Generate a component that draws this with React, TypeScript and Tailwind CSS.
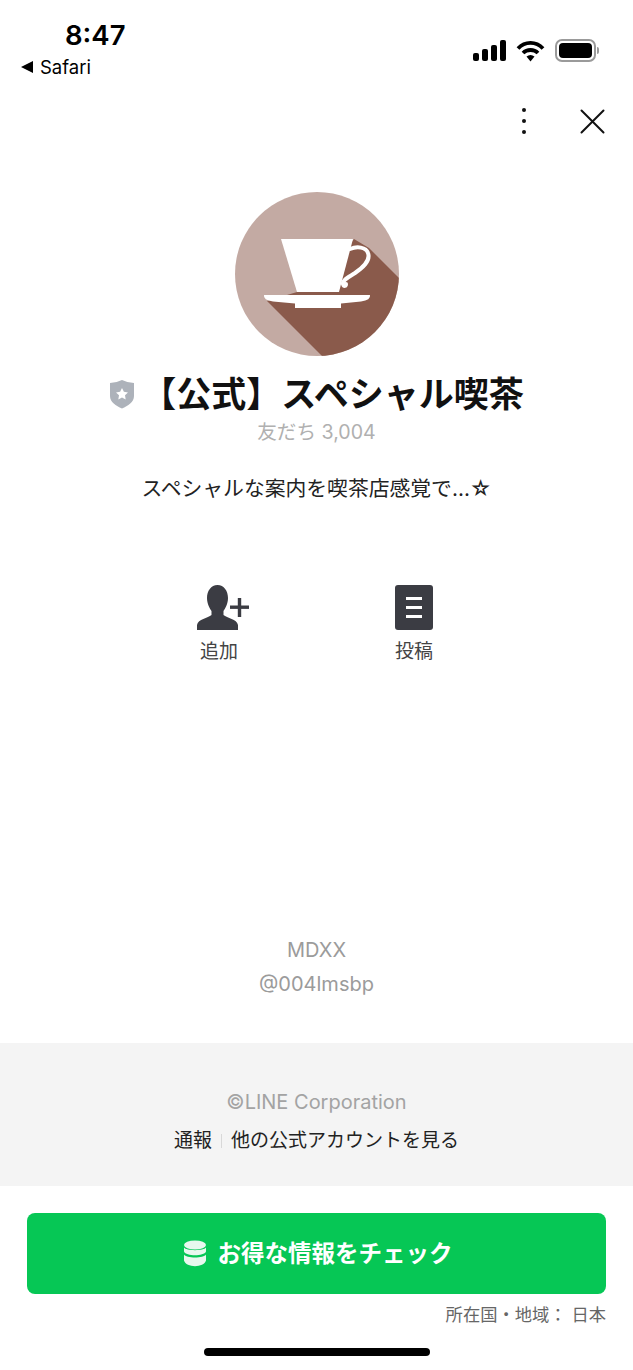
const FONT = "font-['Inter','Noto_Sans_CJK_JP',sans-serif]";

function StatusIcons() {
  return (
    <div className="flex items-center gap-[10px]">
      <svg width="33" height="21" viewBox="0 0 33 21" fill="#000">
        <rect x="0" y="13" width="6" height="8" rx="2" />
        <rect x="9" y="9" width="6" height="12" rx="2" />
        <rect x="18" y="5" width="6" height="16" rx="2" />
        <rect x="27" y="0" width="6" height="21" rx="2" />
      </svg>
      <svg width="29" height="22" viewBox="0 0 29 22" fill="none" stroke="#000" strokeWidth="3.8">
        <path d="M2 8.5 C9 1 20 1 27 8.5" />
        <path d="M7 13 C11 9 18 9 22 13" />
        <path d="M10.5 16.5 L14.5 21.5 L18.5 16.5 C16 14.5 13 14.5 10.5 16.5 Z" fill="#000" stroke="none" />
      </svg>
      <div className="flex items-center">
        <div className="flex h-[23px] w-[41px] items-center justify-center rounded-[7px] border-2 border-[#9a9a9a] p-[2px]">
          <div className="h-full w-full rounded-[4px] bg-black" />
        </div>
        <div className="ml-[1px] h-[7px] w-[2px] rounded-r-full bg-[#9a9a9a]" />
      </div>
    </div>
  );
}

function StatusBar() {
  return (
    <div className="flex h-[93px] shrink-0 items-start justify-between pl-[21px] pr-[34px]">
      <div className="flex flex-col">
        <div className="mt-[17px] pl-[44px] text-[27.5px] leading-[36px] font-semibold text-black">8:47</div>
        <div className="mt-[2px] flex items-center gap-[7px] text-[18.5px] leading-[24px] text-black">
          <svg width="12" height="12" viewBox="0 0 12 12" fill="#000">
            <path d="M0 6 L12 0 V12 Z" />
          </svg>
          <span>Safari</span>
        </div>
      </div>
      <div className="mt-[39px]">
        <StatusIcons />
      </div>
    </div>
  );
}

function ToolBar() {
  return (
    <div className="flex h-[58px] shrink-0 items-center justify-end gap-[54px] pr-[28px] pb-[2px]">
      <div className="flex flex-col gap-[6.5px]">
        <div className="h-[4.5px] w-[4.5px] rounded-full bg-[#111]" />
        <div className="h-[4.5px] w-[4.5px] rounded-full bg-[#111]" />
        <div className="h-[4.5px] w-[4.5px] rounded-full bg-[#111]" />
      </div>
      <svg width="25" height="25" viewBox="0 0 25 25" stroke="#111" strokeWidth="2" strokeLinecap="round">
        <path d="M1.5 1.5 L23.5 23.5 M23.5 1.5 L1.5 23.5" />
      </svg>
    </div>
  );
}

function CafeLogo() {
  return (
    <svg width="164" height="164" viewBox="0 0 164 164" className="block">
      <defs>
        <clipPath id="logo-circle">
          <circle cx="82" cy="82" r="82" />
        </clipPath>
      </defs>
      <g clipPath="url(#logo-circle)">
        <rect width="164" height="164" fill="#c3aaa3" />
        <path d="M32 109 L88 165 L170 165 L170 92 L134 56 L119 47 L100 70 L62 100 Z" fill="#8a5a4b" />
      </g>
      <path d="M46 47 H118 L104 100 H62 Z" fill="#fff" />
      <path
        d="M115 57 C122 54 131 55 133 61 C136 69 127 76 120 81 C114 85 107 88 108 92 C109 95 111 94 111 92"
        fill="none"
        stroke="#fff"
        strokeWidth="4"
        strokeLinecap="round"
      />
      <path d="M29 103 H135 Q136 108 126 109.5 L106 111.5 V116 H60 V111.5 L38 109.5 Q28 108 29 103 Z" fill="#fff" />
    </svg>
  );
}

function ShieldBadge() {
  return (
    <svg width="26" height="30" viewBox="0 0 26 30" className="shrink-0">
      <path d="M1 4 Q7 4 13 1 Q19 4 25 4 V17 C25 23 19 27 13 29.5 C7 27 1 23 1 17 Z" fill="#adb2ba" />
      <path
        d="M13 9 L14.9 12.8 L19 13.4 L16 16.3 L16.7 20.4 L13 18.5 L9.3 20.4 L10 16.3 L7 13.4 L11.1 12.8 Z"
        fill="#fff"
      />
    </svg>
  );
}

function Profile() {
  return (
    <div className="flex flex-col items-center">
      <div className="mt-[41px]">
        <CafeLogo />
      </div>
      <div className="mt-[14px] flex h-[48px] items-center">
        <ShieldBadge />
        <h1 className="ml-[6px] text-[35px] leading-[48px] font-semibold whitespace-nowrap text-[#111]">
          【公式】スペシャル喫茶
        </h1>
      </div>
      <div className="mt-[1px] text-[19.6px] leading-[26px] text-[#b0b0b0]">友だち 3,004</div>
      <p className="mt-[29px] text-[20.8px] leading-[30px] text-[#222]">スペシャルな案内を喫茶店感覚で…☆</p>
    </div>
  );
}

function Actions() {
  return (
    <div className="mt-[81px] flex justify-center gap-[135px]">
      <div className="flex w-[60px] flex-col items-center">
        <svg width="52" height="45" viewBox="0 0 52 45" fill="#3b3c43" className="ml-[8px]">
          <path d="M20.5 0 C27 0 31 6 31 13 C31 19 28 24 26.5 26 V30 C30 33 40 34 41 40 V45 H0 V40 C1 34 11 33 14.5 30 V26 C13 24 10 19 10 13 C10 6 14 0 20.5 0 Z" />
          <rect x="31" y="19" width="21" height="7" fill="#fff" />
          <rect x="33" y="20.5" width="19" height="3.4" />
          <rect x="40.8" y="13" width="3.4" height="19" />
        </svg>
        <span className="mt-[10px] text-[19px] leading-[24px] whitespace-nowrap text-[#444]">追加</span>
      </div>
      <div className="flex w-[60px] flex-col items-center">
        <div className="flex h-[45px] w-[38px] flex-col items-center justify-center gap-[6px] rounded-[3px] bg-[#3b3c43]">
          <div className="h-[3px] w-[16px] bg-white" />
          <div className="h-[3px] w-[16px] bg-white" />
          <div className="h-[3px] w-[16px] bg-white" />
        </div>
        <span className="mt-[10px] text-[19px] leading-[24px] whitespace-nowrap text-[#444]">投稿</span>
      </div>
    </div>
  );
}

function Account() {
  return (
    <div className="flex flex-col items-center gap-[10px] text-[20px] leading-[24px] text-[#9b9b9b]">
      <div>MDXX</div>
      <div>@004lmsbp</div>
    </div>
  );
}

function FooterLinks() {
  return (
    <div className="flex h-[143px] shrink-0 flex-col items-center bg-[#f4f4f4] pt-[46px]">
      <div className="text-[20px] leading-[26px] text-[#a3a3a3]">©LINE Corporation</div>
      <div className="mt-[13px] flex items-center text-[19px] leading-[26px] text-[#222]">
        <span>通報</span>
        <div className="mx-[9px] h-[14px] w-px bg-[#d8d8d8]" />
        <span>他の公式アカウントを見る</span>
      </div>
    </div>
  );
}

function CoinsIcon() {
  return (
    <svg width="22" height="27" viewBox="0 0 22 26" fill="#e8f8ee">
      <ellipse cx="11" cy="4.5" rx="11" ry="4.5" />
      <path d="M0 7 C2 10.5 20 10.5 22 7 V11 C20 16 2 16 0 11 Z" />
      <path d="M0 14 C2 18 20 18 22 14 V20 C20 27.5 2 27.5 0 20 Z" />
    </svg>
  );
}

function BottomBar() {
  return (
    <div className="flex h-[184px] shrink-0 flex-col px-[27px] pt-[27px]">
      <button className="flex h-[81px] w-full items-center justify-center gap-[12px] rounded-[8px] bg-[#06c755] pl-[3px] text-[23.5px] font-semibold text-white">
        <CoinsIcon />
        <span>お得な情報をチェック</span>
      </button>
      <div className="mt-[9px] text-right text-[17.3px] leading-[24px] text-[#666]">所在国・地域： 日本</div>
      <div className="mt-[21px] h-[8px] w-[226px] self-center rounded-full bg-black" />
    </div>
  );
}

export default function App() {
  return (
    <div className={`flex h-[1370px] w-[633px] flex-col overflow-hidden bg-white ${FONT}`}>
      <StatusBar />
      <ToolBar />
      <Profile />
      <Actions />
      <div className="flex flex-1 flex-col justify-end pb-[47px]">
        <Account />
      </div>
      <FooterLinks />
      <BottomBar />
    </div>
  );
}
